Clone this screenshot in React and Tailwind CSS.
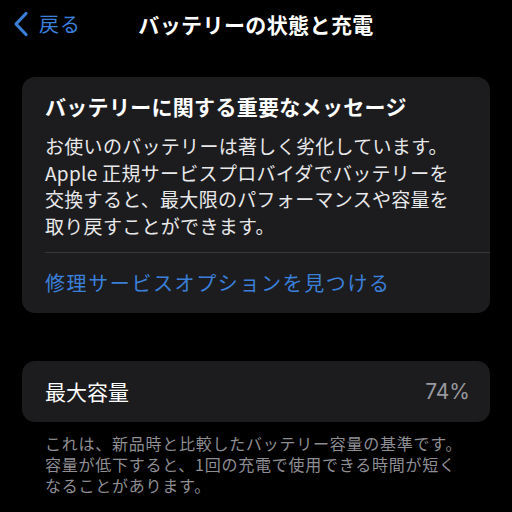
import React from 'react';

const font = { fontFamily: '"Noto Sans CJK JP", "Noto Sans", sans-serif' };

const App = () => {
  return (
    <div className="w-[512px] h-[512px] bg-black text-white overflow-hidden" style={font}>
      {/* ナビゲーションバー */}
      <div className="relative h-[48px] flex items-center">
        <div className="absolute left-[11px] top-[10px] flex items-center text-[#3a7fd9]">
          <svg width="20" height="28" viewBox="0 0 20 28" fill="none">
            <path d="M15 3.5 L5 14 L15 24.5" stroke="currentColor" strokeWidth="3.2" strokeLinecap="round" strokeLinejoin="round" />
          </svg>
          <span className="ml-[8px] text-[20px] leading-none tracking-[1px]">戻る</span>
        </div>
        <div className="w-full text-center text-[21px] font-bold leading-none tracking-[0.4px]">バッテリーの状態と充電</div>
      </div>

      {/* メッセージカード */}
      <div className="mx-[22px] mt-[29px] bg-[#1c1c1e] rounded-[13px] pl-[23px]">
        <div className="pt-[14px] pb-[13px] pr-[10px]">
          <div className="text-[21px] font-bold leading-[30px] tracking-[0.3px]">バッテリーに関する重要なメッセージ</div>
          <div className="mt-[12px] text-[19px] leading-[26.5px] text-[#e8e8ea] tracking-[0.3px] whitespace-nowrap">
            <div>お使いのバッテリーは著しく劣化しています。</div>
            <div>Apple 正規サービスプロバイダでバッテリーを</div>
            <div>交換すると、最大限のパフォーマンスや容量を</div>
            <div>取り戻すことができます。</div>
          </div>
        </div>
        <div className="h-px bg-[#38383a]" />
        <div className="h-[60px] flex items-center text-[20px] text-[#3a7fd9] tracking-[1.6px]">修理サービスオプションを見つける</div>
      </div>

      {/* 最大容量 */}
      <div className="mx-[22px] mt-[48px] h-[61px] bg-[#1c1c1e] rounded-[13px] flex items-center justify-between pl-[23px] pr-[20px]">
        <span className="text-[21px]">最大容量</span>
        <span className="text-[21px] text-[#98989e]" style={{ fontFamily: '"Inter", "Noto Sans", sans-serif' }}>74%</span>
      </div>
      <div className="mx-[45px] mt-[11px] text-[16px] leading-[21px] text-[#8e8e93] tracking-[0.75px] whitespace-nowrap">
        <div>これは、新品時と比較したバッテリー容量の基準です。</div>
        <div>容量が低下すると、1回の充電で使用できる時間が短く</div>
        <div>なることがあります。</div>
      </div>
    </div>
  );
};

export default App;
